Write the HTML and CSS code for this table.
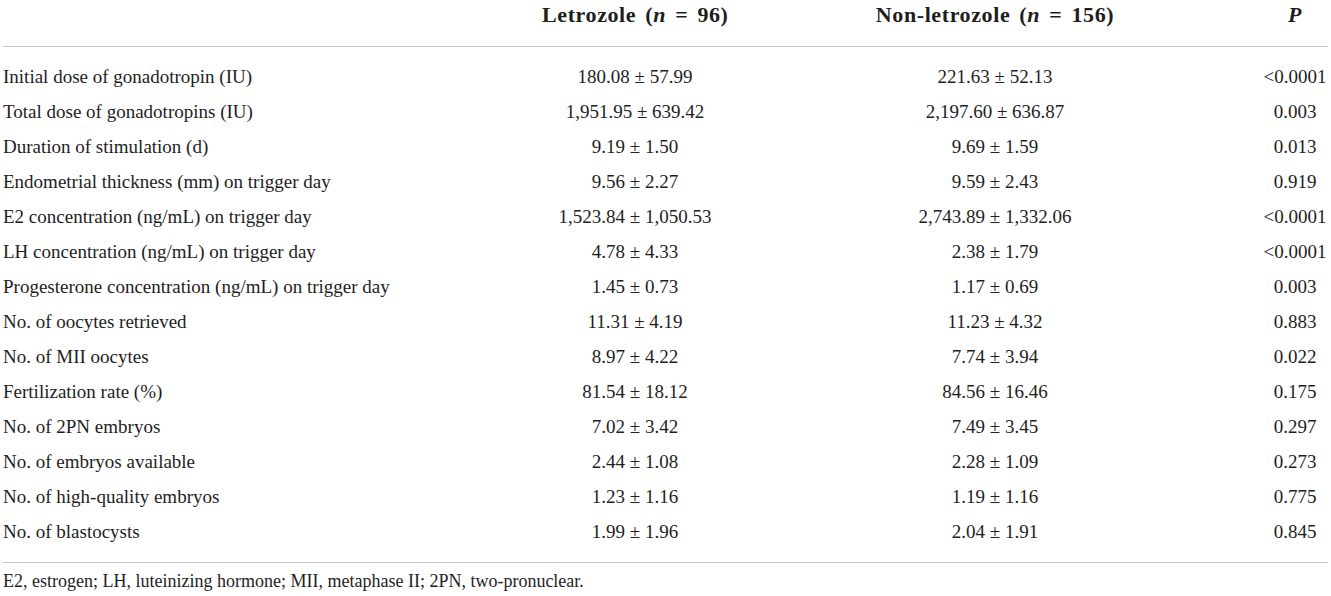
FILE: index.html
```html
<!DOCTYPE html>
<html lang="en">
  <head>
    <meta charset="UTF-8" />
    <meta name="viewport" content="width=device-width, initial-scale=1.0" />
    <title>Letrozole vs non-letrozole</title>
    <link rel="stylesheet" href="styles.css">
  </head>
  <body>
    <div class="container">
      <table class="data-table">
        <colgroup>
          <col class="col-label" />
          <col class="col-a" />
          <col class="col-b" />
          <col class="col-p" />
        </colgroup>
        <thead>
          <tr>
            <th></th>
            <th>Letrozole (<i>n</i> = 96)</th>
            <th>Non-letrozole (<i>n</i> = 156)</th>
            <th><i>P</i></th>
          </tr>
        </thead>
        <tbody>
          <tr><td>Initial dose of gonadotropin (IU)</td><td>180.08 ± 57.99</td><td>221.63 ± 52.13</td><td>&lt;0.0001</td></tr>
          <tr><td>Total dose of gonadotropins (IU)</td><td>1,951.95 ± 639.42</td><td>2,197.60 ± 636.87</td><td>0.003</td></tr>
          <tr><td>Duration of stimulation (d)</td><td>9.19 ± 1.50</td><td>9.69 ± 1.59</td><td>0.013</td></tr>
          <tr><td>Endometrial thickness (mm) on trigger day</td><td>9.56 ± 2.27</td><td>9.59 ± 2.43</td><td>0.919</td></tr>
          <tr><td>E2 concentration (ng/mL) on trigger day</td><td>1,523.84 ± 1,050.53</td><td>2,743.89 ± 1,332.06</td><td>&lt;0.0001</td></tr>
          <tr><td>LH concentration (ng/mL) on trigger day</td><td>4.78 ± 4.33</td><td>2.38 ± 1.79</td><td>&lt;0.0001</td></tr>
          <tr><td>Progesterone concentration (ng/mL) on trigger day</td><td>1.45 ± 0.73</td><td>1.17 ± 0.69</td><td>0.003</td></tr>
          <tr><td>No. of oocytes retrieved</td><td>11.31 ± 4.19</td><td>11.23 ± 4.32</td><td>0.883</td></tr>
          <tr><td>No. of MII oocytes</td><td>8.97 ± 4.22</td><td>7.74 ± 3.94</td><td>0.022</td></tr>
          <tr><td>Fertilization rate (%)</td><td>81.54 ± 18.12</td><td>84.56 ± 16.46</td><td>0.175</td></tr>
          <tr><td>No. of 2PN embryos</td><td>7.02 ± 3.42</td><td>7.49 ± 3.45</td><td>0.297</td></tr>
          <tr><td>No. of embryos available</td><td>2.44 ± 1.08</td><td>2.28 ± 1.09</td><td>0.273</td></tr>
          <tr><td>No. of high-quality embryos</td><td>1.23 ± 1.16</td><td>1.19 ± 1.16</td><td>0.775</td></tr>
          <tr><td>No. of blastocysts</td><td>1.99 ± 1.96</td><td>2.04 ± 1.91</td><td>0.845</td></tr>
        </tbody>
      </table>
      <p class="footnote">E2, estrogen; LH, luteinizing hormone; MII, metaphase II; 2PN, two-pronuclear.</p>
    </div>
  </body>
</html>
```

FILE: styles.css
```css
body {
  margin: 0;
  background-color: #ffffff;
  color: #1e1e1e;
  font-family: "Liberation Serif", "Times New Roman", serif;
  font-size: 19px;
}

.container {
  width: 1325px;
  padding: 0 3px;
}

.data-table {
  width: 100%;
  border-collapse: collapse;
  table-layout: fixed;
}

.col-label {
  width: 539px;
}

.col-a {
  width: 186px;
}

.col-b {
  width: 534px;
}

.col-p {
  width: 66px;
}

.data-table th {
  height: 24px;
  padding: 3px 0 19px;
  line-height: 24px;
  font-size: 22px;
  font-weight: bold;
  word-spacing: 3px;
  letter-spacing: 0.6px;
  text-align: center;
  vertical-align: top;
  white-space: nowrap;
  border-bottom: 1px solid #c6c6c6;
}

.data-table td {
  height: 35px;
  padding: 0;
  line-height: 22px;
  text-align: center;
  vertical-align: middle;
  white-space: nowrap;
}

.data-table td:first-child {
  text-align: left;
}

.data-table tbody tr:first-child td {
  padding-top: 12px;
}

.data-table tbody tr:last-child td {
  padding-bottom: 13px;
  border-bottom: 1px solid #c6c6c6;
}

.footnote {
  margin: 7px 0 0;
  line-height: 22px;
  font-size: 18px;
}
```
